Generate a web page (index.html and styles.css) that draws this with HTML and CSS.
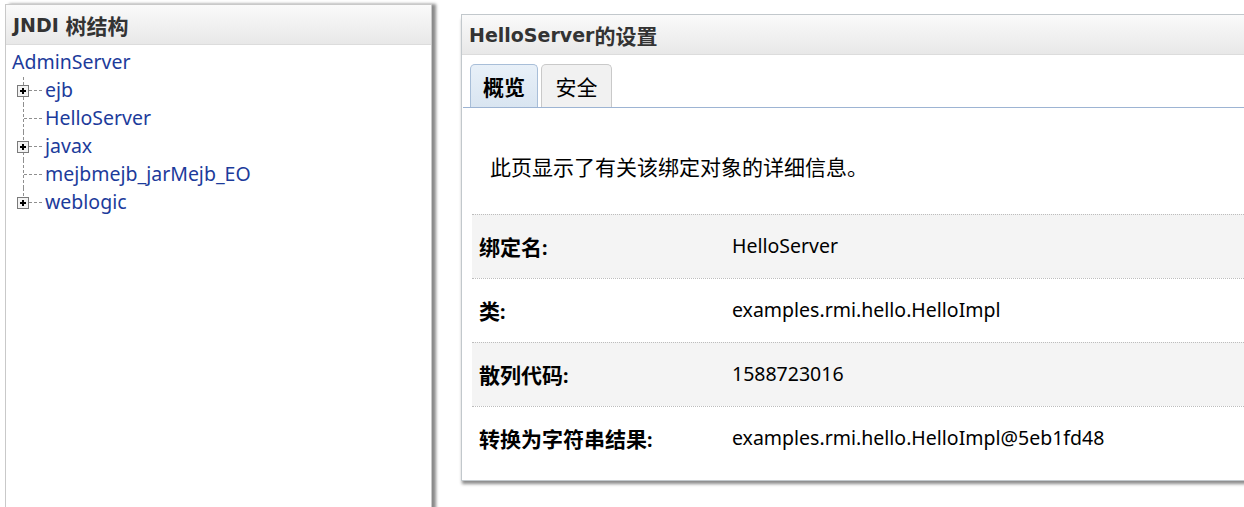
FILE: index.html
```html
<!DOCTYPE html>
<html lang="zh-CN">
<head>
<meta charset="utf-8">
<title>JNDI</title>
<link rel="stylesheet" href="styles.css">
</head>
<body>
<div class="left">
  <div class="panel-head">JNDI <span class="zh">树结构</span></div>
  <div class="tree">
    <div class="root">AdminServer</div>
    <div class="node">
      <svg class="gut" width="33" height="28" viewBox="0 0 33 28"><line class="dv" x1="11.5" y1="-4" x2="11.5" y2="28"/><line class="dh" x1="17" y1="14.5" x2="32" y2="14.5"/><rect class="bx" x="5.5" y="9.5" width="11" height="11"/><path class="pl" d="M8 15h6M11 12v6"/></svg>
      <span class="lnk">ejb</span>
    </div>
    <div class="node">
      <svg class="gut" width="33" height="28" viewBox="0 0 33 28"><line class="dv" x1="11.5" y1="0" x2="11.5" y2="28"/><line class="dh" x1="12" y1="14.5" x2="32" y2="14.5"/></svg>
      <span class="lnk">HelloServer</span>
    </div>
    <div class="node">
      <svg class="gut" width="33" height="28" viewBox="0 0 33 28"><line class="dv" x1="11.5" y1="0" x2="11.5" y2="28"/><line class="dh" x1="17" y1="14.5" x2="32" y2="14.5"/><rect class="bx" x="5.5" y="9.5" width="11" height="11"/><path class="pl" d="M8 15h6M11 12v6"/></svg>
      <span class="lnk">javax</span>
    </div>
    <div class="node">
      <svg class="gut" width="33" height="28" viewBox="0 0 33 28"><line class="dv" x1="11.5" y1="0" x2="11.5" y2="28"/><line class="dh" x1="12" y1="14.5" x2="32" y2="14.5"/></svg>
      <span class="lnk">mejbmejb_jarMejb_EO</span>
    </div>
    <div class="node">
      <svg class="gut" width="33" height="28" viewBox="0 0 33 28"><line class="dv" x1="11.5" y1="0" x2="11.5" y2="10"/><line class="dh" x1="17" y1="14.5" x2="32" y2="14.5"/><rect class="bx" x="5.5" y="9.5" width="11" height="11"/><path class="pl" d="M8 15h6M11 12v6"/></svg>
      <span class="lnk">weblogic</span>
    </div>
  </div>
</div>

<div class="right">
  <div class="panel-head rhead">HelloServer<span class="zh">的设置</span></div>
  <div class="tabs">
    <div class="tab active"><span class="zh">概览</span></div>
    <div class="tab"><span class="zh">安全</span></div>
  </div>
  <p class="desc"><span class="zh">此页显示了有关该绑定对象的详细信息。</span></p>
  <div class="props">
    <div class="row alt"><div class="lbl"><span class="zh">绑定名</span>:</div><div class="val">HelloServer</div></div>
    <div class="row"><div class="lbl"><span class="zh">类</span>:</div><div class="val">examples.rmi.hello.HelloImpl</div></div>
    <div class="row alt"><div class="lbl"><span class="zh">散列代码</span>:</div><div class="val">1588723016</div></div>
    <div class="row"><div class="lbl"><span class="zh">转换为字符串结果</span>:</div><div class="val">examples.rmi.hello.HelloImpl@5eb1fd48</div></div>
  </div>
</div>
</body>
</html>
```

FILE: styles.css
```css
html, body {
  margin: 0;
  padding: 0;
}
body {
  width: 1244px;
  height: 507px;
  overflow: hidden;
  background: #fff;
  display: flex;
  align-items: flex-start;
  font-family: "Noto Sans", "Noto Sans CJK SC", sans-serif;
  font-size: 19.5px;
  color: #000;
}
.zh {
  font-family: "Noto Sans CJK SC", sans-serif;
  font-size: 21px;
}
.left {
  margin: 4px 0 0 5px;
  width: 425px;
  height: 530px;
  border: 1px solid #c9c9c9;
  box-shadow: 4px 0 3px #8a8a8a;
  background: #fff;
  flex: none;
}
.panel-head {
  height: 40px;
  box-sizing: border-box;
  padding-left: 7px;
  background: linear-gradient(#fafafa, #e8e8e8);
  border-bottom: 1px solid #dcdcdc;
  font-family: "DejaVu Sans", "Noto Sans CJK SC", sans-serif;
  font-weight: bold;
  font-size: 19px;
  color: #333;
  line-height: 40px;
  display: flex;
  align-items: center;
  white-space: pre;
}
.panel-head .zh {
  font-weight: bold;
}
.tree {
  padding: 3px 0 0 6px;
  line-height: 28px;
}
.root, .lnk {
  color: #1c3b9b;
}
.node {
  display: flex;
  height: 28px;
  align-items: center;
}
.gut {
  display: block;
  flex: none;
}
.dv, .dh {
  stroke: #8f8f8f;
  stroke-width: 1;
  stroke-dasharray: 3 2;
}
.bx {
  fill: #f3f3f3;
  stroke: #7a7a7a;
}
.pl {
  stroke: #000;
  stroke-width: 2;
}
.right {
  margin: 14px 0 0 29px;
  width: 830px;
  flex: none;
  border: 1px solid #c2c8cc;
  box-shadow: 0 4px 3px -1px #8c8c8c;
  background: #fff;
}
.rhead {
  padding-left: 7px;
}
.tabs {
  display: flex;
  gap: 3px;
  padding: 9px 0 0 7px;
  margin-left: 1px;
  border-bottom: 1px solid #9db4d3;
  align-items: flex-end;
}
.tab {
  width: 66px;
  height: 42px;
  border: 1px solid #c9c9c9;
  border-bottom: none;
  border-radius: 5px 5px 0 0;
  background: #f1f1f1;
  display: flex;
  align-items: center;
  justify-content: center;
  box-sizing: content-box;
}
.tab + .tab {
  width: 69px;
}
.tab.active {
  background: linear-gradient(#e8f0f8, #d9e5f1);
  border-color: #a8bed8;
  font-weight: bold;
}
.desc {
  margin: 0;
  padding: 44px 0 0 28px;
  line-height: 28px;
}
.props {
  margin: 32px 0 10px 10px;
}
.row {
  display: flex;
  height: 64px;
  align-items: center;
  padding-bottom: 2px;
  border-top: 1px dotted #bdbdbd;
  box-sizing: border-box;
}
.row.alt {
  background: #f4f4f4;
}
.lbl {
  width: 253px;
  padding-left: 7px;
  font-weight: bold;
  flex: none;
}
.lbl .zh {
  font-weight: bold;
}
.val {
  flex: 1;
}
```
